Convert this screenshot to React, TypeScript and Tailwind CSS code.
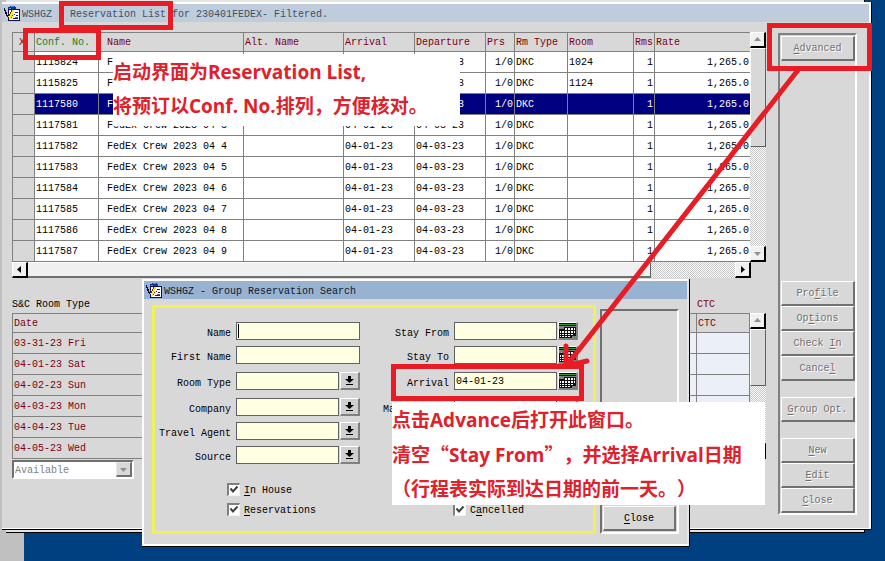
import React from "react";

type Booking = { conf: string; name: string; room: string };

const bookings: Booking[] = [
  { conf: "1115824", name: "FedEx Crew 2023 04 1", room: "1024" },
  { conf: "1115825", name: "FedEx Crew 2023 04 1", room: "1124" },
  { conf: "1117580", name: "FedEx Crew 2023 04 2", room: "" },
  { conf: "1117581", name: "FedEx Crew 2023 04 3", room: "" },
  { conf: "1117582", name: "FedEx Crew 2023 04 4", room: "" },
  { conf: "1117583", name: "FedEx Crew 2023 04 5", room: "" },
  { conf: "1117584", name: "FedEx Crew 2023 04 6", room: "" },
  { conf: "1117585", name: "FedEx Crew 2023 04 7", room: "" },
  { conf: "1117586", name: "FedEx Crew 2023 04 8", room: "" },
  { conf: "1117587", name: "FedEx Crew 2023 04 9", room: "" },
];

const dates = ["03-31-23 Fri", "04-01-23 Sat", "04-02-23 Sun", "04-03-23 Mon", "04-04-23 Tue", "04-05-23 Wed"];

const raised = "border border-t-white border-l-white border-r-[#606060] border-b-[#606060] bg-[#d8d8d8]";
const hatch = "bg-[repeating-conic-gradient(#ffffff_0_25%,#c4c4c4_0_50%)] bg-[length:2px_2px]";

function AppIcon() {
  return (
    <svg viewBox="0 0 17 17" className="size-[17px] shrink-0" shapeRendering="crispEdges" aria-hidden="true">
      <path d="M4 2h2V1h5v1h1v4H4z" fill="#1c2f9c" />
      <path d="M7 1h3v1H7zM5 3h2v1H5z" fill="#35a0b8" />
      <path d="M0 3h1v2h1v2h1v3h2v2H3v-1H2V9H1V6H0z" fill="#10102c" />
      <path d="M4.500 4.500h11v11h-11z" fill="#fff" stroke="#101058" strokeWidth="1.500" />
      <path d="M8 5h2v2H9v2h2v1h-1v2H8v2H6v1H5v-2h1v-1H4v-1h1V9h1V7h1V6h1z" fill="#f5e83a" />
      <path d="M7 5h1v2H7zM6 7h1v2H6zM5 9h1v2H5zM8 10h1v1H8zM7 12h1v1H7z" fill="#7a3310" />
      <path d="M11 7h3v1h-3zM10 9h1v1h-1zM12 10h2v1h-2zM9 13h5v1H9z" fill="#1a1a8c" />
      <path d="M11 12h3v1h-3z" fill="#d03030" />
    </svg>
  );
}

function Mnemonic({ text, at }: { text: string; at: number }) {
  return (
    <span>
      {text.slice(0, at)}
      <span className="underline underline-offset-2">{text[at]}</span>
      {text.slice(at + 1)}
    </span>
  );
}

function SideButton({ text, at, active = false }: { text: string; at: number; active?: boolean }) {
  return (
    <button
      type="button"
      className={`h-[25px] w-full border-t border-l border-r-2 border-b-2 border-t-white border-l-white border-r-[#707070] border-b-[#707070] bg-[#d8d8d8] pt-0.5 text-center ${
        active ? "text-black" : "text-[#707070] [text-shadow:1px_1px_0_#fff]"
      }`}
    >
      <Mnemonic text={text} at={at} />
    </button>
  );
}

function Arrow({ dir, dim = false }: { dir: "up" | "down" | "left" | "right"; dim?: boolean }) {
  const d = { up: "M1 6 4.500 2 8 6z", down: "M1 3h7L4.500 7z", left: "M6 1v7L2 4.500z", right: "M3 1v7l4-3.500z" }[dir];
  return (
    <svg viewBox="0 0 9 9" className="size-[9px]" aria-hidden="true">
      <path d={d} fill={dim ? "#909090" : "#000"} />
    </svg>
  );
}

function ScrollButton({ dir, dim = false }: { dir: "up" | "down" | "left" | "right"; dim?: boolean }) {
  return (
    <button
      type="button"
      aria-label={`Scroll ${dir}`}
      className="flex size-4 shrink-0 items-center justify-center border-t border-l border-r-2 border-b-2 border-t-white border-l-white border-r-black border-b-black bg-[#f0f0f0]"
    >
      <Arrow dir={dir} dim={dim} />
    </button>
  );
}

function ReservationTable() {
  const th = "border-t border-l border-[#808080] px-px pt-0.5 text-left font-normal";
  const td = "border-t border-l border-[#808080] px-px pt-0.5 whitespace-pre overflow-hidden";
  return (
    <table className="w-full table-fixed border-separate border-spacing-0 border-b border-[#808080]">
      <colgroup>
        <col className="w-[22px]" />
        <col className="w-16" />
        <col className="w-[145px]" />
        <col className="w-[100px]" />
        <col className="w-[71px]" />
        <col className="w-[71px]" />
        <col className="w-[29px]" />
        <col className="w-[53px]" />
        <col className="w-[66px]" />
        <col className="w-[21px]" />
        <col />
      </colgroup>
      <thead>
        <tr className="h-[19px] text-[#800010]">
          <th className="border-t border-l border-[#808080] pt-0.5 pl-1.5 text-left font-normal">X</th>
          <th className={`${th} text-[#208020]`}>Conf. No.</th>
          <th className="border-t border-l border-[#808080] pt-0.5 pl-2 text-left font-normal">Name</th>
          <th className={th}>Alt. Name</th>
          <th className={th}>Arrival</th>
          <th className={th}>Departure</th>
          <th className={th}>Prs</th>
          <th className={th}>Rm Type</th>
          <th className={th}>Room</th>
          <th className={th}>Rms</th>
          <th className={th}>Rate</th>
        </tr>
      </thead>
      <tbody>
        {bookings.map((b, i) => (
          <tr key={b.conf} className={i === 2 ? "h-[21px] bg-[#000080] text-white" : "h-[21px] bg-white text-black"}>
            <td className="border-t border-l border-[#808080] bg-[#d8d8d8]" />
            <td className={td}>{b.conf}</td>
            <td className="overflow-hidden border-t border-l border-[#808080] pt-0.5 pl-2 whitespace-pre">{b.name}</td>
            <td className={td} />
            <td className={td}>04-01-23</td>
            <td className={td}>04-03-23</td>
            <td className={`${td} text-right`}>1/0</td>
            <td className={td}>DKC</td>
            <td className={td}>{b.room}</td>
            <td className={`${td} text-right`}>1</td>
            <td className={`${td} text-right`}>1,265.0</td>
          </tr>
        ))}
      </tbody>
    </table>
  );
}

function ReservationGrid() {
  return (
    <div>
      <div className="flex">
        <div className="min-w-0 flex-1">
          <ReservationTable />
        </div>
        <div className={`flex w-4 flex-col ${hatch}`}>
          <ScrollButton dir="up" dim />
          <div className={`h-[99px] ${raised}`} />
          <div className="flex-1" />
          <ScrollButton dir="down" dim />
        </div>
      </div>
      <div className={`mr-[15px] flex h-4 ${hatch}`}>
        <ScrollButton dir="left" />
        <div className="mr-[84px] flex-1 border-t border-r border-b-2 border-t-white border-r-[#606060] border-b-[#707070] bg-[#f0f0f0]" />
        <ScrollButton dir="right" />
      </div>
    </div>
  );
}

function RoomTypeGrid() {
  const cell = "border-t border-l border-[#808080] px-px pt-0.5 text-left font-normal";
  return (
    <div className="mt-[18px]">
      <div className="flex h-[17px] items-center justify-between">
        <span>S&amp;C Room Type</span>
        <span className="w-[69px] text-[#800010]">CTC</span>
      </div>
      <div className="flex">
        <table className="min-w-0 flex-1 table-fixed border-separate border-spacing-0 border-r border-b border-[#808080] text-[#800010]">
          <colgroup>
            <col />
            <col className="w-[400px]" />
            <col className="w-[53px]" />
          </colgroup>
          <thead>
            <tr className="h-[19px]">
              <th className={cell}>Date</th>
              <th className={cell} />
              <th className={cell}>CTC</th>
            </tr>
          </thead>
          <tbody>
            {dates.map((d) => (
              <tr key={d} className="h-[21px]">
                <td className={cell}>{d}</td>
                <td className={`${cell} bg-[#ebf0f8]`} />
                <td className={`${cell} bg-[#ebf0f8]`} />
              </tr>
            ))}
          </tbody>
        </table>
        <div className={`flex w-4 flex-col ${hatch}`}>
          <ScrollButton dir="up" dim />
          <div className={`h-[57px] ${raised}`} />
          <div className="flex-1" />
          <ScrollButton dir="down" dim />
        </div>
      </div>
      <div className="relative mt-px w-[122px]">
        <select
          disabled
          aria-label="Room type figures"
          className="block h-[19px] w-full appearance-none border-2 border-t-[#707070] border-r-white border-b-white border-l-[#707070] bg-white pt-0.5 pl-px text-[#808080] opacity-100"
        >
          <option>Available</option>
        </select>
        <span className="pointer-events-none absolute top-0.5 right-0.5 flex h-[15px] w-4 items-center justify-center border-t border-l border-r-2 border-b-2 border-[#e8e8e8] border-r-[#707070] border-b-[#707070] bg-[#d8d8d8]">
          <Arrow dir="down" dim />
        </span>
      </div>
    </div>
  );
}

function MainWindow() {
  return (
    <main className="relative mt-0.5 mr-[13px] ml-0.5 border-r border-b border-black">
      <div className="border-t-2 border-r-2 border-b border-white bg-[#d8d8d8] pb-[13px]">
        <header className="flex h-[18px] items-center gap-px bg-[#bfccdb] pl-0.5 text-[#3f4f64]">
          <AppIcon />
          <h1 className="pt-1 whitespace-pre">WSHGZ - Reservation List for 230401FEDEX- Filtered.</h1>
        </header>
        <div className="flex gap-3 pt-2.5 pr-3 pl-2.5">
          <section className="min-w-0 flex-1">
            <ReservationGrid />
            <RoomTypeGrid />
          </section>
          <nav
            aria-label="Actions"
            className="mt-px flex h-[482px] w-[79px] flex-col border-2 border-t-[#808080] border-r-white border-b-white border-l-[#808080] pt-px pl-px"
          >
            <SideButton text="Advanced" at={0} />
            <div className="flex-1" />
            <SideButton text="Profile" at={3} />
            <SideButton text="Options" at={2} />
            <SideButton text="Check In" at={6} />
            <SideButton text="Cancel" at={5} />
            <div className="mt-4 mb-4">
              <SideButton text="Group Opt." at={0} />
            </div>
            <SideButton text="New" at={0} />
            <SideButton text="Edit" at={0} />
            <SideButton text="Close" at={0} />
          </nav>
        </div>
      </div>
    </main>
  );
}

function CalendarIcon() {
  return (
    <svg viewBox="0 0 17 15" className="h-[15px] w-[17px]" shapeRendering="crispEdges" aria-hidden="true">
      <path d="M0 0h17v15H0z" fill="#101010" />
      <path d="M0 1h17v1H0z" fill="#2e9a3c" />
      <path d="M0 3h17v1H0zM0 4h5v2H0zM13 13h4v2h-4z" fill="#808080" />
      <path
        d="M6 5h2v2H6zM9 5h2v2H9zM12 5h2v2h-2zM15 5h1v2h-1zM1 8h1v2H1zM3 8h2v2H3zM6 8h2v2H6zM9 8h2v2H9zM12 8h2v2h-2zM15 8h1v2h-1zM1 11h1v1H1zM3 11h2v1H3zM6 11h2v1H6zM9 11h2v1H9zM12 11h2v1h-2zM1 13h1v1H1zM3 13h2v1H3zM6 13h2v1H6zM9 13h2v1H9z"
        fill="#fff"
      />
    </svg>
  );
}

function ListIcon() {
  return (
    <svg viewBox="0 0 9 10" className="h-2.5 w-[9px]" aria-hidden="true">
      <path d="M3 0h3v3h3L4.500 7 0 3h3zM1 8h7v1H1z" fill="#000" />
    </svg>
  );
}

type Kind = "text" | "list" | "date";

function Field({ id, label, kind, value = "", focus = false }: { id: string; label: string; kind: Kind; value?: string; focus?: boolean }) {
  return (
    <div className="flex h-[18px] items-center justify-end">
      <label htmlFor={id} className="pt-1.5 pr-[5px] whitespace-pre">
        {label}
      </label>
      <div className="relative flex h-[18px] w-[124px] shrink-0">
        <input
          id={id}
          type="text"
          defaultValue={value}
          className="h-[18px] min-w-0 flex-1 border border-[#606060] bg-[#ffffe1] px-px outline-none"
        />
        {focus && <span className="absolute top-0.5 left-0.5 h-3.5 w-px bg-black" />}
        {kind !== "text" && (
          <button
            type="button"
            aria-label={`Choose ${label}`}
            className="ml-px flex w-5 items-center justify-center border-t border-l border-r-2 border-b-2 border-t-white border-l-white border-r-[#808080] border-b-[#808080] bg-[#d0d0d0]"
          >
            {kind === "date" ? <CalendarIcon /> : <ListIcon />}
          </button>
        )}
      </div>
    </div>
  );
}

function Tick({ text }: { text: string }) {
  return (
    <label className="flex items-center gap-1">
      <span className="relative size-[13px]">
        <input
          type="checkbox"
          defaultChecked
          className="block size-[13px] appearance-none border border-t-2 border-l-2 border-t-[#808080] border-r-[#f4f4f4] border-b-[#f4f4f4] border-l-[#808080] bg-white"
        />
        <svg viewBox="0 0 13 13" className="pointer-events-none absolute inset-0" aria-hidden="true">
          <path d="M3.500 5.500 6 8.500l4.500-5" fill="none" stroke="#404040" strokeWidth="2" />
        </svg>
      </span>
      <span className="pt-1">
        <Mnemonic text={text} at={text === "Cancelled" ? 1 : 0} />
      </span>
    </label>
  );
}

function SearchDialog() {
  return (
    <section
      role="dialog"
      aria-labelledby="search-title"
      className="absolute top-[279px] left-[142px] w-[548px] border-r border-b border-black"
    >
      <div className="border-2 border-white border-r-[#e4e4e4] bg-[#d8d8d8]">
        <header className="flex h-[18px] items-center gap-px bg-[#98b2d1] pl-0.5 text-[#101828]">
          <AppIcon />
          <h2 id="search-title" className="pt-1 whitespace-pre">
            WSHGZ - Group Reservation Search
          </h2>
        </header>
        <div className="flex gap-1 pt-1.5 pr-2 pb-2.5 pl-2">
          <form className="flex h-[229px] flex-1 flex-col border-[3px] border-[#f0f058] pt-3.5 pr-[15px]">
            <div className="flex justify-between">
              <div className="flex w-[205px] flex-col gap-1.5">
                <Field id="name" label="Name" kind="text" focus />
                <Field id="first" label="First Name" kind="text" />
                <div className="mt-0.5 mb-0.5">
                  <Field id="room-type" label="Room Type" kind="list" />
                </div>
                <Field id="company" label="Company" kind="list" />
                <Field id="agent" label="Travel Agent" kind="list" />
                <Field id="source" label="Source" kind="list" />
              </div>
              <div className="flex w-[205px] flex-col gap-1.5">
                <Field id="stay-from" label="Stay From" kind="date" />
                <Field id="stay-to" label="Stay To" kind="date" />
                <div className="mt-0.5 mb-0.5">
                  <Field id="arrival" label="Arrival" kind="date" value="04-01-23" />
                </div>
                <Field id="market" label="Market Code" kind="list" />
              </div>
            </div>
            <div className="mt-[17px] flex items-end gap-[137px] pl-[72px]">
              <div className="flex flex-col gap-1">
                <Tick text="In House" />
                <Tick text="Reservations" />
              </div>
              <Tick text="Cancelled" />
            </div>
          </form>
          <div className="mt-1 flex w-[79px] flex-col justify-end border-2 border-t-[#707070] border-r-white border-b-white border-l-[#707070] p-px">
            <SideButton text="Close" at={0} active />
          </div>
        </div>
      </div>
    </section>
  );
}

const noteText =
  "absolute bg-white pt-px font-['Open_Sans','Noto_Sans_CJK_SC',sans-serif] text-[19px] font-bold leading-[34px] whitespace-pre text-[#e0202b] [text-spacing-trim:space-all]";
const box = "pointer-events-none absolute border-[#e81c24]";

function Notes() {
  return (
    <>
      <div lang="zh-CN" className={`${noteText} top-[54px] left-[113px] h-[72px] w-[347px]`}>
        <p>启动界面为Reservation List,</p>
        <p>将预订以Conf. No.排列，方便核对。</p>
      </div>
      <div lang="zh-CN" className={`${noteText} top-[402px] left-[392px] h-[103px] w-[373px]`}>
        <p>点击Advance后打开此窗口。</p>
        <p>
          清空<span className="font-['Noto_Sans_CJK_SC',sans-serif]">“</span>Stay From
          <span className="font-['Noto_Sans_CJK_SC',sans-serif]">”</span>，并选择Arrival日期
        </p>
        <p>（行程表实际到达日期的前一天。）</p>
      </div>
      <div className={`${box} top-px left-[59px] h-[29px] w-[114px] border-[5px]`} />
      <div className={`${box} top-7 left-[23px] h-8 w-[78px] border-[5px]`} />
      <div className={`${box} top-[23px] left-[767px] h-12 w-[105px] border-[5px]`} />
      <div className={`${box} top-[364px] left-[391px] h-[37px] w-[193px] border-[5px]`} />
      <svg viewBox="0 0 250 310" className="pointer-events-none absolute top-[65px] left-[555px] h-[310px] w-[250px]" aria-hidden="true">
        <path d="M243 5 12 300M11 281v20l21-5" fill="none" stroke="#e81c24" strokeWidth="5" strokeLinecap="round" strokeLinejoin="round" />
      </svg>
    </>
  );
}

export default function App() {
  return (
    <div className="relative flow-root min-h-screen overflow-hidden bg-[#004080] font-['Liberation_Mono',monospace] text-[10px] leading-3 text-black">
      <div className="absolute inset-y-0 left-0 w-6 bg-[#c0c0c0]" />
      <div className="absolute top-0 right-5 left-1.5 h-[533px] border-r border-b border-black bg-[#e4e4e4]" />
      <MainWindow />
      <SearchDialog />
      <Notes />
    </div>
  );
}
